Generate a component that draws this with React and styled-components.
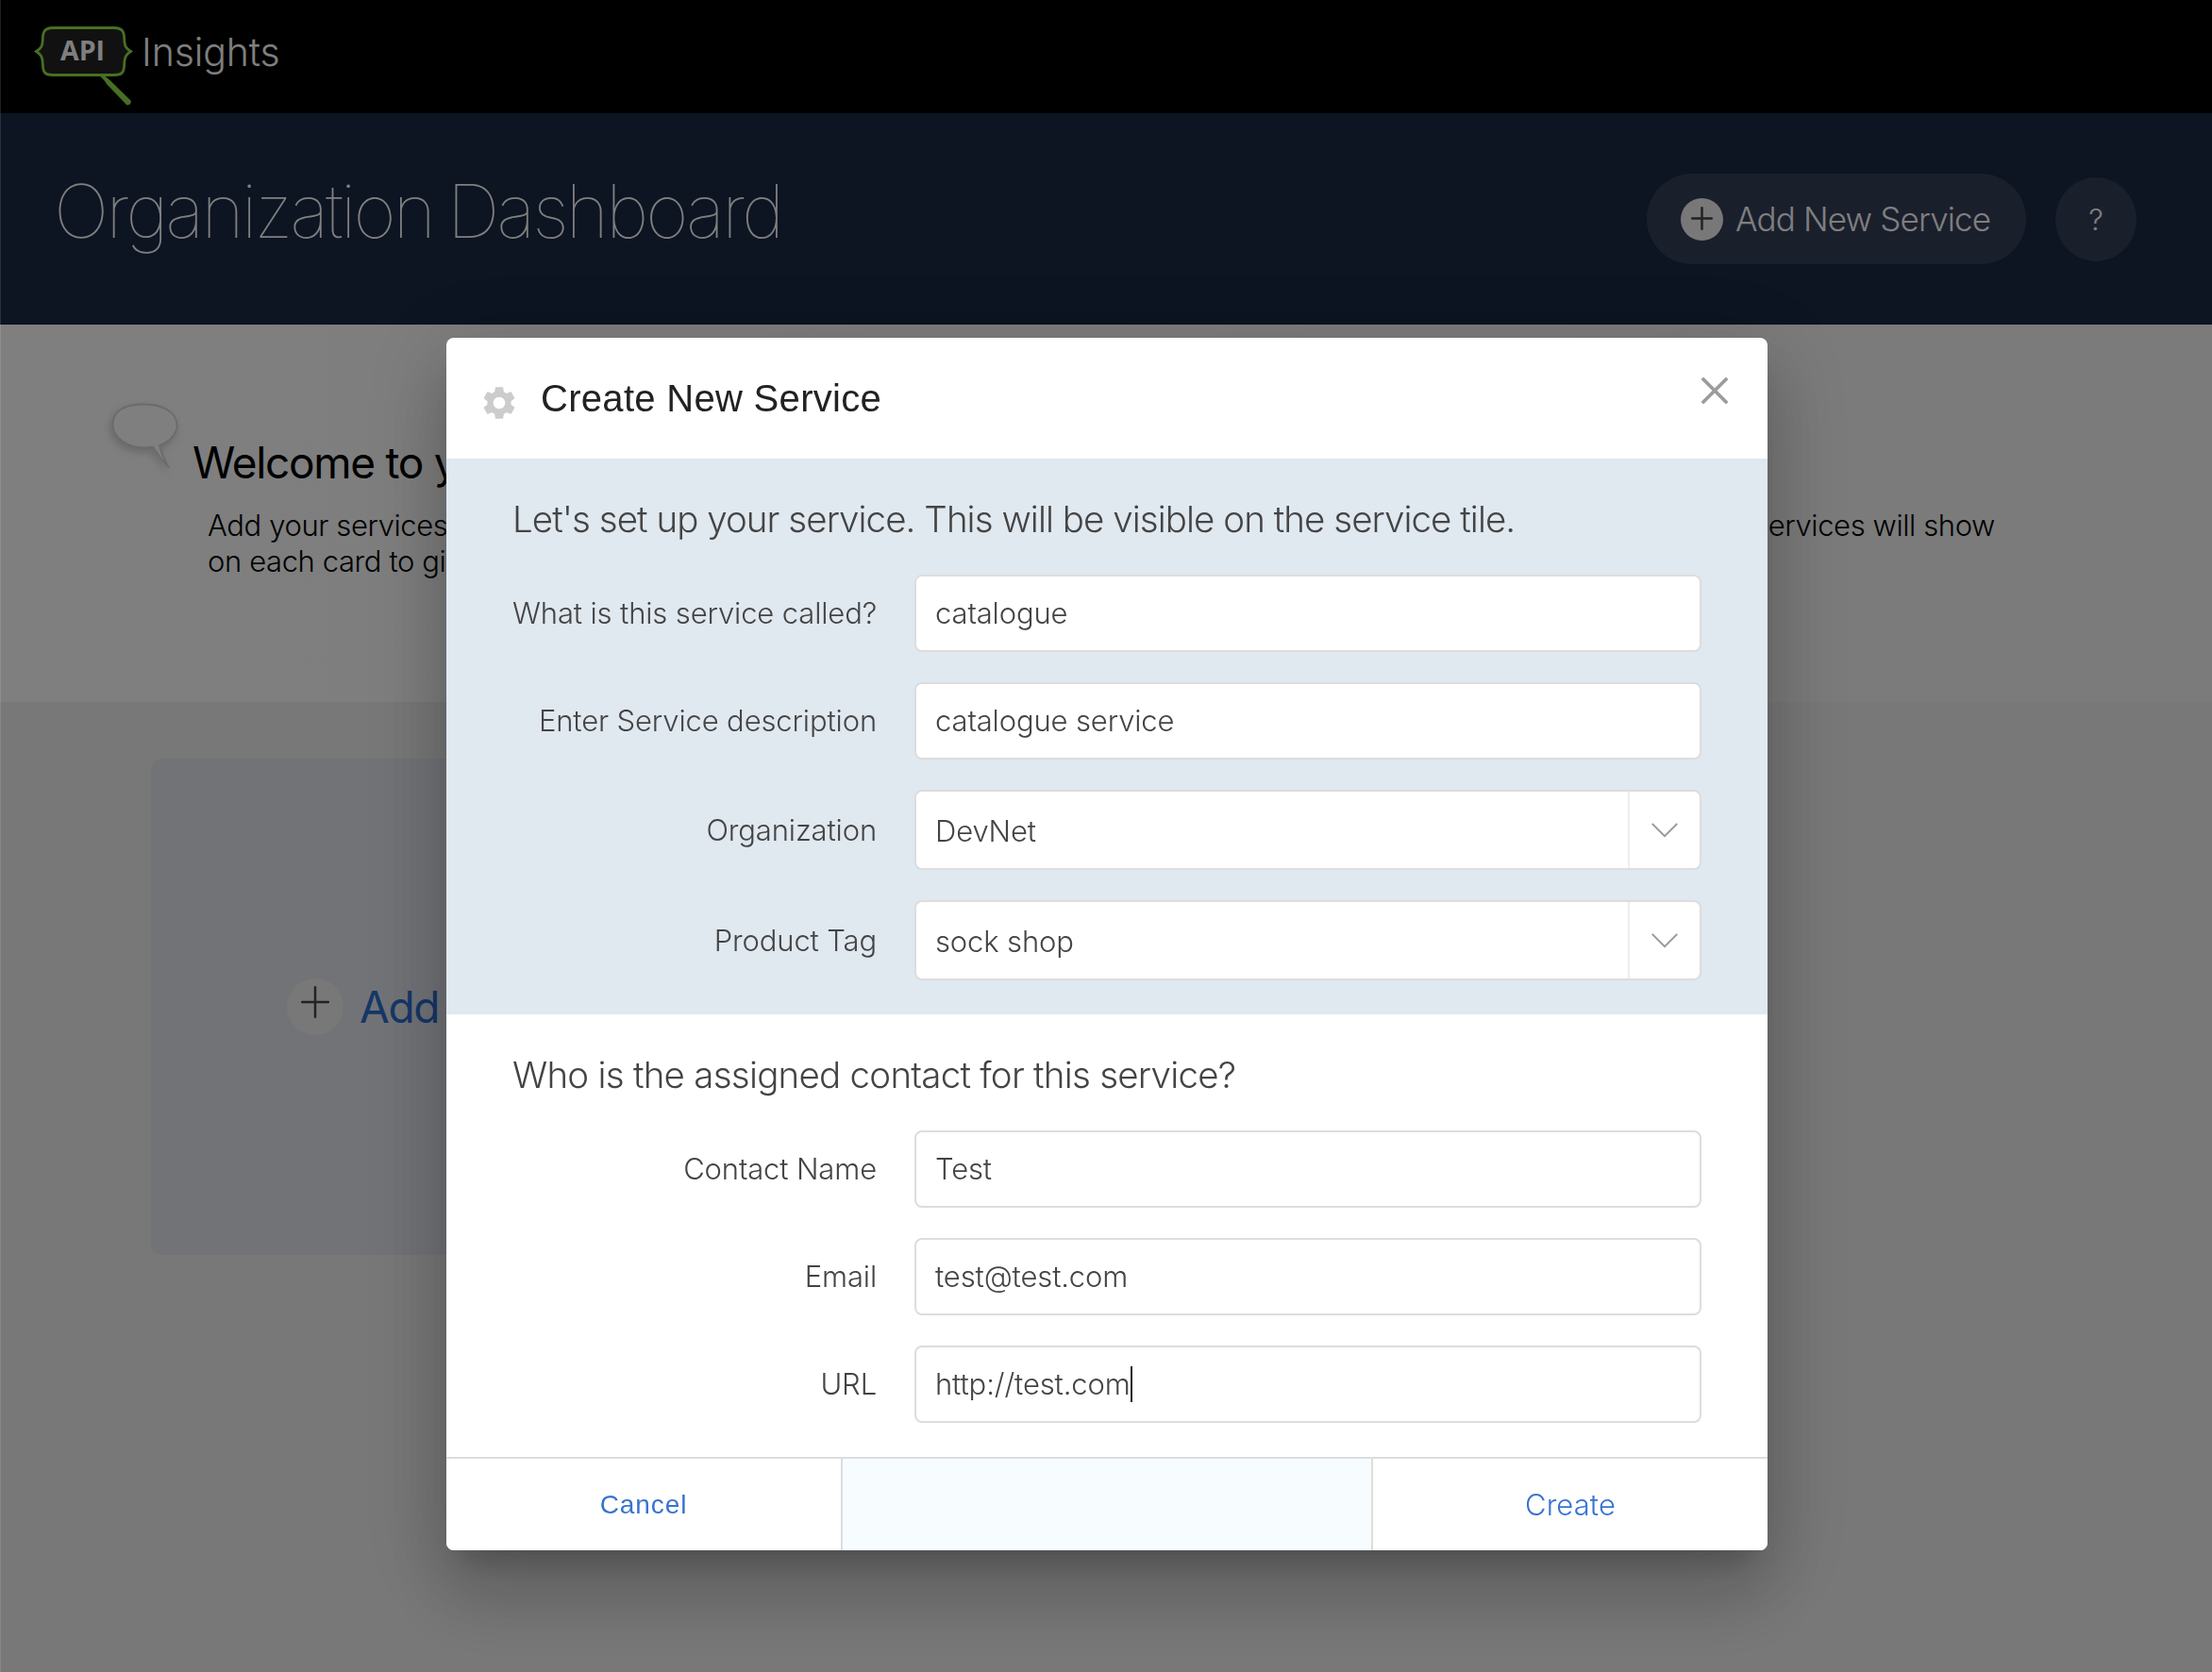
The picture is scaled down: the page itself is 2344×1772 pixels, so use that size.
import React from "react";
import styled, { createGlobalStyle } from "styled-components";
import { MdSettings } from "react-icons/md";

const GlobalStyle = createGlobalStyle`
  *, *::before, *::after { box-sizing: border-box; }
  html, body { margin: 0; padding: 0; background: #f0f0f0; }
  body { font-family: Inter, "Liberation Sans", sans-serif; font-weight: 300; overflow: hidden; }
  h1, h2, h3, p { margin: 0; font-weight: inherit; }
  button { font: inherit; border: 0; margin: 0; padding: 0; cursor: pointer; }
`;

const Page = styled.div`
  height: 1772px;
  display: flex;
  flex-direction: column;
  background: #f0f0f0;
`;

const TopBar = styled.nav`
  height: 120px;
  padding: 24px 0 0 36px;
  display: flex;
  align-items: flex-start;
  background: #000;
`;

const Product = styled.span`
  margin-left: 4px;
  padding-top: 6px;
  font-size: 41px;
  line-height: 50px;
  letter-spacing: -0.1px;
  color: #fff;
`;

const Hero = styled.header`
  height: 224px;
  padding: 0 80px 0 57px;
  display: flex;
  align-items: center;
  background: #1a2844;
`;

const PageTitle = styled.h1`
  flex: 1;
  padding-bottom: 17px;
  font-size: 78px;
  line-height: 94px;
  font-weight: 100;
  letter-spacing: -3.1px;
  word-spacing: -4px;
  color: #fff;
`;

const AddButton = styled.button`
  width: 402px;
  height: 96px;
  border-radius: 48px;
  padding-left: 36px;
  display: flex;
  align-items: center;
  gap: 13px;
  font-size: 35px;
  letter-spacing: -0.85px;
  white-space: nowrap;
  color: #fff;
  background: #343e58;
`;

const HelpButton = styled.button`
  width: 86px;
  height: 89px;
  margin-left: 31px;
  border-radius: 50%;
  font-size: 31px;
  color: #fff;
  background: #343e58;
`;

const Badge = styled.span`
  flex: none;
  width: ${(p) => p.$size}px;
  height: ${(p) => p.$size}px;
  border-radius: 50%;
  display: flex;
  align-items: center;
  justify-content: center;
  padding-bottom: ${(p) => p.$lift}px;
  background: #f0f0f0;
`;

const Welcome = styled.section`
  height: 400px;
  padding: 82px 230px 0 118px;
  display: flex;
  background: linear-gradient(to right, #fff, #f7f7f7 80%);
`;

const WelcomeText = styled.div`
  flex: 1;
  padding: 36px 0 0 11px;
`;

const WelcomeTitle = styled.h2`
  font-size: 46px;
  line-height: 56px;
  font-weight: 400;
  letter-spacing: -1.3px;
  color: #000;
`;

const Blurb = styled.div`
  padding: 20px 0 0 16px;
  font-size: 31px;
  line-height: 38px;
  letter-spacing: -0.4px;
  color: #000;
`;

const BlurbLine = styled.p`
  display: flex;
  justify-content: space-between;
`;

const Services = styled.main`
  flex: 1;
  padding: 60px 160px;
`;

const AddCard = styled.button`
  width: 640px;
  height: 526px;
  padding-left: 144px;
  border-radius: 10px;
  display: flex;
  align-items: center;
  gap: 17px;
  font-size: 46px;
  font-weight: 400;
  letter-spacing: -1.3px;
  color: #2a6fce;
  background: #e4e6ef;
`;

const Backdrop = styled.div`
  position: fixed;
  inset: 0;
  display: flex;
  justify-content: center;
  align-items: flex-start;
  padding: 358px 0 0 2px;
  background: rgba(0, 0, 0, 0.5);
  box-shadow: inset 1px 0 0 rgba(255, 255, 255, 0.12);
`;

const Dialog = styled.div`
  width: 1400px;
  border-radius: 8px;
  overflow: hidden;
  background: #fff;
  box-shadow:
    0 22px 30px -14px rgba(0, 0, 0, 0.2),
    0 48px 76px 6px rgba(0, 0, 0, 0.14),
    0 18px 92px 16px rgba(0, 0, 0, 0.12);
`;

const DialogHeader = styled.header`
  height: 128px;
  padding: 0 42px 0 35px;
  display: flex;
  align-items: flex-start;
`;

const GearIcon = styled(MdSettings)`
  width: 42px;
  height: 42px;
  margin-top: 48px;
  color: #ccc;
`;

const DialogTitle = styled.h2`
  flex: 1;
  margin: 41px 0 0 23px;
  font-family: "Liberation Sans", Arial, sans-serif;
  font-size: 40px;
  line-height: 46px;
  font-weight: 400;
  letter-spacing: 0.3px;
  color: #222;
`;

const CloseButton = styled.button`
  margin-top: 42px;
  display: flex;
  background: none;
`;

const Section = styled.section`
  padding: 44px 70px 36px;
  background: ${(p) => (p.$tinted ? "#e0e8f0" : "#fff")};
`;

const SectionTitle = styled.h3`
  margin-bottom: 39px;
  font-size: 38.5px;
  line-height: 40px;
  letter-spacing: ${(p) => p.$tracking}px;
  white-space: nowrap;
  color: #444;
`;

const Fields = styled.div`
  display: flex;
  flex-direction: column;
  gap: 32px;
`;

const Field = styled.div`
  display: grid;
  grid-template-columns: 386px 834px;
  column-gap: 40px;
  align-items: center;
  font-size: 31px;
  line-height: 38px;
  letter-spacing: -0.14px;
  color: #444;
`;

const Label = styled.label`
  text-align: right;
  white-space: nowrap;
`;

const Control = styled.div`
  height: ${(p) => (p.$select ? 85 : 82)}px;
  padding-left: 20px;
  border: 2px solid #ddd;
  border-radius: 8px;
  display: flex;
  align-items: center;
  background: #fff;
`;

const Value = styled.span`
  padding-top: ${(p) => (p.$select ? 3 : 0)}px;
`;

const Caret = styled.span`
  width: 2px;
  height: 38px;
  background: #222;
`;

const SelectArrow = styled.span`
  width: 76px;
  height: 100%;
  margin-left: auto;
  border-left: 2px solid #eee;
  display: flex;
  align-items: center;
  justify-content: center;
`;

const Footer = styled.footer`
  height: 99px;
  border-top: 2px solid #ddd;
  display: grid;
  grid-template-columns: 418px 1fr 418px;
`;

const Cancel = styled.button`
  font-family: "Liberation Sans", Arial, sans-serif;
  font-size: 28px;
  font-weight: 400;
  letter-spacing: 0.9px;
  color: #3873d2;
  background: #fff;
`;

const Create = styled.button`
  font-size: 31px;
  font-weight: 300;
  letter-spacing: 0.1px;
  color: #3873d2;
  background: #fff;
`;

const FooterFill = styled.div`
  border: solid #ddd;
  border-width: 0 2px;
  background: #f7fcff;
`;

const LogoText = styled.text`
  font: 700 28.5px "Open Sans", "Noto Sans", sans-serif;
  fill: #fff;
`;

const BubbleSvg = styled.svg`
  overflow: visible;
  filter: drop-shadow(-2px 4px 4px rgba(0, 0, 0, 0.18));
`;

function Logo() {
  return (
    <svg width="110" height="90" viewBox="36 24 110 90">
      <path
        d="M56 29.5 C47 29.5 45.5 34 45.3 41 C45 49 44 51 38.5 54.5 C44 58 45 61 45.3 68 C45.5 76 47 79.5 56 79.5 H121 C130 79.5 131.5 76 131.7 68 C132 61 133 58 138.5 54.5 C133 51 132 49 131.7 41 C131.5 34 130 29.5 121 29.5 Z"
        fill="#222"
        stroke="#91dc46"
        strokeWidth="2.8"
        strokeMiterlimit="8"
      />
      <path d="M105.5 80 L110.5 80 L117 85.5 L139 107 L138 110.5 L134.500 111.500 L112.500 88.5 L111.5 86.5 Z" fill="#91dc46" />
      <LogoText x="64" y="64">API</LogoText>
    </svg>
  );
}

function Plus({ w, h }) {
  return (
    <svg width={w} height={h} viewBox={`0 0 ${w} ${h}`} fill="none" stroke="#444" strokeWidth="2.5" strokeLinecap="round">
      <path d={`M${w / 2} 1.2 V${h - 1.2} M1.2 ${h / 2} H${w - 1.2}`} />
    </svg>
  );
}

function SpeechBubble() {
  return (
    <BubbleSvg width="75" height="74" viewBox="118 426 75 74" fill="#fff" stroke="#d6d6d6" strokeWidth="1.8">
      <path d="M153 428.5 C134 428.5 119.5 434 119.5 450 C119.5 464 136 475 155 474.5 L162 473.5 C166 480 172 488 179 496 C174.5 488 171 480 169 472 C180 468 187.5 460 187.5 450.5 C187.5 438 174 428.5 153 428.5 Z" />
    </BubbleSvg>
  );
}

function Cross() {
  return (
    <svg width="28" height="28" viewBox="0 0 28 28" fill="none" stroke="#9c9c9c" strokeWidth="3.8" strokeLinecap="round">
      <path d="M2 2 L26 26 M26 2 L2 26" />
    </svg>
  );
}

function Chevron() {
  return (
    <svg width="28" height="16" viewBox="0 0 28 16" fill="none" stroke="#999" strokeWidth="2">
      <path d="M0.7 0.9 L14 14.2 L27.3 0.9" />
    </svg>
  );
}

function FormField({ label, value, select, focused }) {
  return (
    <Field>
      <Label>{label}</Label>
      <Control $select={select}>
        <Value $select={select}>{value}</Value>
        {focused && <Caret />}
        {select && (
          <SelectArrow>
            <Chevron />
          </SelectArrow>
        )}
      </Control>
    </Field>
  );
}

const serviceFields = [
  { label: "What is this service called?", value: "catalogue" },
  { label: "Enter Service description", value: "catalogue service" },
  { label: "Organization", value: "DevNet", select: true },
  { label: "Product Tag", value: "sock shop", select: true },
];

const contactFields = [
  { label: "Contact Name", value: "Test" },
  { label: "Email", value: "test@test.com" },
  { label: "URL", value: "http://test.com", focused: true },
];

export default function App() {
  return (
    <>
      <GlobalStyle />
      <Page>
        <TopBar>
          <Logo />
          <Product>Insights</Product>
        </TopBar>
        <Hero>
          <PageTitle>Organization Dashboard</PageTitle>
          <AddButton>
            <Badge $size={45} $lift={1}>
              <Plus w={23} h={25} />
            </Badge>
            Add New Service
          </AddButton>
          <HelpButton>?</HelpButton>
        </Hero>
        <Welcome>
          <SpeechBubble />
          <WelcomeText>
            <WelcomeTitle>Welcome to your</WelcomeTitle>
            <Blurb>
              <BlurbLine>
                <span>Add your services</span>
                <span>services will show</span>
              </BlurbLine>
              <BlurbLine>on each card to give</BlurbLine>
            </Blurb>
          </WelcomeText>
        </Welcome>
        <Services>
          <AddCard>
            <Badge $size={60} $lift={11}>
              <Plus w={30} h={34} />
            </Badge>
            Add
          </AddCard>
        </Services>
      </Page>
      <Backdrop>
        <Dialog role="dialog">
          <DialogHeader>
            <GearIcon />
            <DialogTitle>Create New Service</DialogTitle>
            <CloseButton>
              <Cross />
            </CloseButton>
          </DialogHeader>
          <Section $tinted>
            <SectionTitle $tracking={-0.95}>
              Let's set up your service. This will be visible on the service tile.
            </SectionTitle>
            <Fields>
              {serviceFields.map((f) => (
                <FormField key={f.label} {...f} />
              ))}
            </Fields>
          </Section>
          <Section>
            <SectionTitle $tracking={-0.75}>Who is the assigned contact for this service?</SectionTitle>
            <Fields>
              {contactFields.map((f) => (
                <FormField key={f.label} {...f} />
              ))}
            </Fields>
          </Section>
          <Footer>
            <Cancel>Cancel</Cancel>
            <FooterFill />
            <Create>Create</Create>
          </Footer>
        </Dialog>
      </Backdrop>
    </>
  );
}
